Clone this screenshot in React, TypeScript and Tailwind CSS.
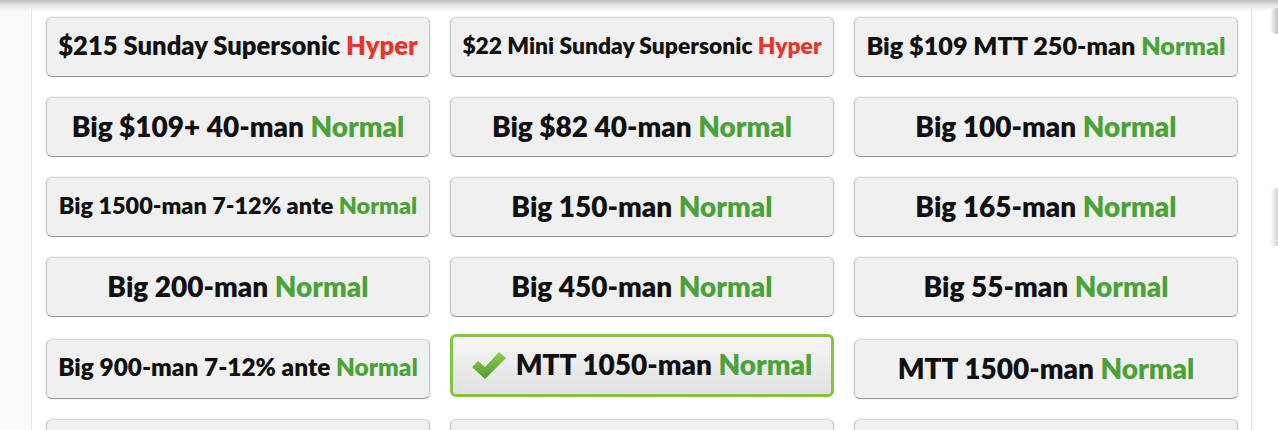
import { useLayoutEffect, useRef, useState } from 'react';

type Item = { label: string; speed: 'Hyper' | 'Normal'; selected?: boolean };

const items: Item[] = [
  { label: '$215 Sunday Supersonic', speed: 'Hyper' },
  { label: '$22 Mini Sunday Supersonic', speed: 'Hyper' },
  { label: 'Big $109 MTT 250-man', speed: 'Normal' },
  { label: 'Big $109+ 40-man', speed: 'Normal' },
  { label: 'Big $82 40-man', speed: 'Normal' },
  { label: 'Big 100-man', speed: 'Normal' },
  { label: 'Big 1500-man 7-12% ante', speed: 'Normal' },
  { label: 'Big 150-man', speed: 'Normal' },
  { label: 'Big 165-man', speed: 'Normal' },
  { label: 'Big 200-man', speed: 'Normal' },
  { label: 'Big 450-man', speed: 'Normal' },
  { label: 'Big 55-man', speed: 'Normal' },
  { label: 'Big 900-man 7-12% ante', speed: 'Normal' },
  { label: 'MTT 1050-man', speed: 'Normal', selected: true },
  { label: 'MTT 1500-man', speed: 'Normal' },
];

const MAX = 360;

function FitLabel({ item }: { item: Item }) {
  const ref = useRef<HTMLSpanElement>(null);
  const [size, setSize] = useState(28);

  useLayoutEffect(() => {
    const el = ref.current;
    if (!el) return;
    const w = el.getBoundingClientRect().width;
    if (w > MAX) setSize(s => Math.floor((s * MAX / w) * 10) / 10);
    // eslint-disable-next-line
  }, []);

  return (
    <span ref={ref} className="whitespace-nowrap font-extrabold leading-none text-[#111]" style={{ fontSize: size }}>
      {item.label}{' '}
      <span className={item.speed === 'Hyper' ? 'text-[#e8352a]' : 'text-[#4ba23a]'}>{item.speed}</span>
    </span>
  );
}

function Check() {
  return (
    <svg width="34" height="28" viewBox="0 0 34 28" className="mr-[10px] mt-[3px] shrink-0">
      <defs>
        <linearGradient id="chk" x1="0" y1="0" x2="0" y2="1">
          <stop offset="0" stopColor="#8fd14f" />
          <stop offset="1" stopColor="#4e9a2a" />
        </linearGradient>
      </defs>
      <path d="M0 15 L6 9 L13 15 L27 0 L34 6 L13 27 Z" fill="url(#chk)" />
    </svg>
  );
}

function TourneyButton({ item, row }: { item?: Item; row: number }) {
  if (item?.selected) {
    return (
      <button className="-mt-[3px] flex h-[63px] w-[384px] items-center justify-center rounded-[6px] border-[3px] border-[#80c642] bg-gradient-to-b from-[#f5f5f5] to-[#e2e2e2] pb-[3px]">
        <Check />
        <FitLabel item={item} />
      </button>
    );
  }
  return (
    <button
      className={`flex h-[60px] w-[384px] items-center justify-center rounded-[6px] border border-[#c4c4c4] border-t-[#dcdcdc] border-b-[#9a9a9a] bg-[#f0f0f0] pb-[3px] shadow-[0_0_0_1px_#f2f2f2] ${row === 4 ? 'mt-[2px]' : ''}`}
    >
      {item && <FitLabel item={item} />}
    </button>
  );
}

export default function App() {
  const cells: (Item | undefined)[] = [...items, undefined, undefined, undefined];
  return (
    <div className="relative h-[430px] w-[1278px] overflow-hidden bg-white" style={{ fontFamily: 'Lato, "Open Sans", sans-serif' }}>
      <div className="flex h-full">
        <div className="w-[31px] shrink-0 bg-[#fafafa]" />
        <div className="w-[1221px] shrink-0 border-x border-[#e6e6e6] bg-white pl-[14px] pt-[17px]">
          <div className="grid grid-cols-[384px_384px_384px] gap-x-5 gap-y-5">
            {cells.map((it, i) => (
              <TourneyButton key={i} item={it} row={Math.floor(i / 3)} />
            ))}
          </div>
        </div>
        <div className="flex-1 bg-white" />
      </div>
      {/* header shadow */}
      <div className="absolute left-0 right-0 top-0 h-[12px] bg-gradient-to-b from-[#bdbdbd] via-[#e8e8e8] to-transparent" />
      {/* side panel edge peeking at right */}
      <div className="absolute right-[-10px] top-[8px] h-[26px] w-[18px] rounded-l-[6px] bg-gradient-to-r from-[#fff] to-[#444] opacity-70" />
      <div className="absolute right-[-10px] top-[188px] h-[58px] w-[18px] rounded-l-[6px] bg-gradient-to-r from-[#fff] to-[#666] opacity-60" />
    </div>
  );
}
